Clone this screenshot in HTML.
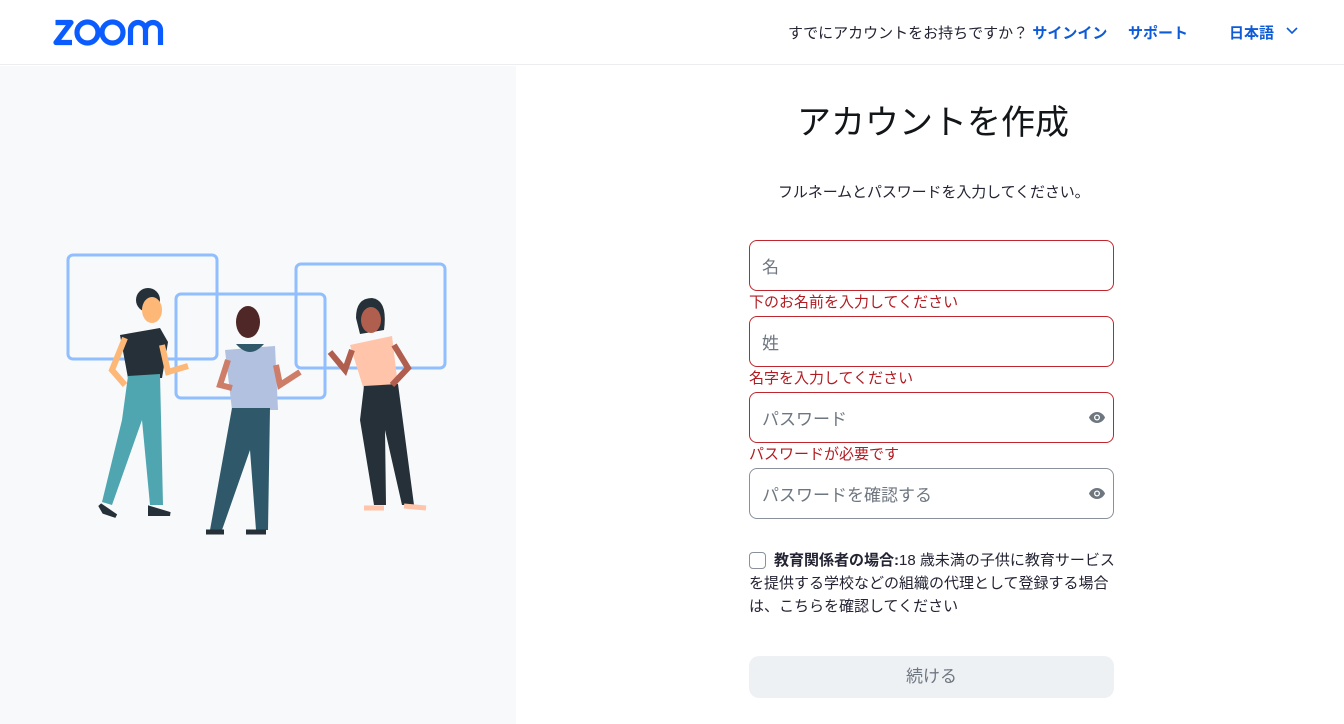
<!DOCTYPE html>
<html><head><meta charset="utf-8"><style>
*{box-sizing:border-box;margin:0;padding:0}
body{width:1344px;height:724px;overflow:hidden;background:#fff;font-family:"Liberation Sans","Noto Sans CJK JP",sans-serif;color:#232333;position:relative}
.hdr{position:absolute;left:0;top:0;width:1344px;height:65px;border-bottom:1px solid #ededf0;background:#fff}
.left{position:absolute;left:0;top:66px;width:516px;height:658px;background:#f7f9fa}
.t{position:absolute;white-space:nowrap}
.inp{position:absolute;left:749px;width:365px;height:51px;border:1px solid #c0262d;border-radius:8px;font-size:17px;color:#6e7680;padding:12px 12px}
.err{position:absolute;left:749px;font-size:15px;color:#b01c22}
.eye{position:absolute;right:8px;top:19px}
</style></head><body>
<div class="hdr">
<svg style="position:absolute;left:53px;top:19px" width="118" height="27" viewBox="0 0 118 27">
<g fill="none" stroke="#0b5cff" stroke-width="5.2" stroke-linejoin="round">
<path d="M2.5 3.5H18L3 23.5H19"/>
<circle cx="34.5" cy="13.5" r="10.5"/>
<circle cx="59.5" cy="13.5" r="10.5"/>
<path d="M77.5 26V11a7.5 7.5 0 0 1 15 0V26M92.5 11a7.5 7.5 0 0 1 15 0V26" stroke-linecap="butt"/>
</g></svg>
<div class="t" style="left:788px;top:22px;font-size:15px">すでにアカウントをお持ちですか？ <span style="color:#0e5bd8;font-weight:bold">サインイン</span></div>
<div class="t" style="left:1128px;top:22px;font-size:15px;color:#0e5bd8;font-weight:bold">サポート</div>
<div class="t" style="left:1229px;top:22px;font-size:15px;color:#0e5bd8;font-weight:bold">日本語 <svg width="12" height="8" style="margin-left:8px;vertical-align:3px"><path d="M1 1l5 5 5-5" stroke="#0e5bd8" stroke-width="1.6" fill="none"/></svg></div>
</div>
<div class="left">
<svg width="516" height="658" style="position:absolute;left:0;top:0">
<g transform="translate(0,-66)">
<g fill="none" stroke="#7fb4ff" stroke-width="3" opacity="0.85">
<rect x="68" y="255" width="149" height="104" rx="5"/>
<rect x="176" y="294" width="149" height="104" rx="5"/>
<rect x="296" y="264" width="149" height="104" rx="5"/>
</g>
<circle cx="148" cy="300" r="12" fill="#253038"/>
<ellipse cx="152" cy="310" rx="10" ry="13" fill="#fdb776"/>
<path d="M120 335 L160 328 L168 342 L162 378 L128 378 Z" fill="#253038"/>
<path d="M128 376 L160 374 L163 505 L150 505 L142 420 L112 505 L102 502 L122 420 Z" fill="#4fa6b0"/>
<path d="M125 338 L112 370 L125 385" stroke="#fdb776" stroke-width="6" fill="none"/>
<path d="M162 345 L168 372 L188 366" stroke="#fdb776" stroke-width="6" fill="none"/>
<path d="M100 505 L116 516 L104 512Z M150 508 L170 514 L150 514Z" fill="#253038" stroke="#253038" stroke-width="4"/>
<ellipse cx="248" cy="322" rx="12" ry="16" fill="#4e2726"/>
<path d="M225 350 L275 346 L278 410 L232 410 Z" fill="#b1c1df"/>
<path d="M236 344 Q250 360 264 344 Z" fill="#2f596a"/>
<path d="M232 408 L270 408 L268 530 L256 530 L250 450 L222 530 L210 530 Z" fill="#2f596a"/>
<path d="M228 360 L220 385 L232 388" stroke="#cd7d68" stroke-width="6" fill="none"/>
<path d="M276 365 L280 385 L300 372" stroke="#cd7d68" stroke-width="6" fill="none"/>
<path d="M206 532 L224 532 M246 532 L266 532" stroke="#253038" stroke-width="5"/>
<path d="M356 318 Q356 298 372 298 Q388 300 384 330 L360 334 Z" fill="#253038"/>
<ellipse cx="371" cy="320" rx="10" ry="13" fill="#b05e4e"/>
<path d="M350 345 L392 336 L398 386 L364 390 Z" fill="#ffc4a9"/>
<path d="M364 386 L398 384 L414 505 L402 505 L385 430 L386 505 L374 505 L360 420 Z" fill="#253038"/>
<path d="M352 350 L345 370 L330 352" stroke="#b05e4e" stroke-width="6" fill="none"/>
<path d="M394 345 L408 368 L392 385" stroke="#b05e4e" stroke-width="6" fill="none"/>
<path d="M364 508 L384 508 M404 506 L426 508" stroke="#ffc4a9" stroke-width="5"/>
</g></svg>
</div>
<div class="t" style="left:797px;top:95px;font-size:34px;color:#131619">アカウントを作成</div>
<div class="t" style="left:778px;top:181px;font-size:15px;letter-spacing:-0.1px">フルネームとパスワードを入力してください。</div>
<div class="inp" style="top:240px">名</div>
<div class="err" style="top:291px">下のお名前を入力してください</div>
<div class="inp" style="top:316px">姓</div>
<div class="err" style="top:367px">名字を入力してください</div>
<div class="inp" style="top:392px">パスワード<svg class="eye" width="16" height="11" viewBox="0 0 16 11"><path d="M8 0C4 0 1 3 0 5.5 1 8 4 11 8 11s7-3 8-5.5C15 3 12 0 8 0z" fill="#6e7680"/><circle cx="8" cy="5.5" r="3" fill="#fff"/><circle cx="8" cy="5.5" r="1.7" fill="#6e7680"/></svg></div>
<div class="err" style="top:443px">パスワードが必要です</div>
<div class="inp" style="top:468px;border-color:#8a919b">パスワードを確認する<svg class="eye" width="16" height="11" viewBox="0 0 16 11"><path d="M8 0C4 0 1 3 0 5.5 1 8 4 11 8 11s7-3 8-5.5C15 3 12 0 8 0z" fill="#6e7680"/><circle cx="8" cy="5.5" r="3" fill="#fff"/><circle cx="8" cy="5.5" r="1.7" fill="#6e7680"/></svg></div>
<div style="position:absolute;left:749px;top:552px;width:17px;height:17px;border:1px solid #8a919b;border-radius:4px"></div>
<div style="position:absolute;left:749px;top:549px;width:366px;font-size:15px;line-height:23px;text-indent:25px">
<b>教育関係者の場合:</b>18 歳未満の子供に教育サービスを提供する学校などの組織の代理として登録する場合は、こちらを確認してください</div>
<div style="position:absolute;left:749px;top:656px;width:365px;height:42px;background:#eef1f4;border-radius:10px;text-align:center;line-height:42px;font-size:17px;color:#6e7680">続ける</div>
</body></html>
